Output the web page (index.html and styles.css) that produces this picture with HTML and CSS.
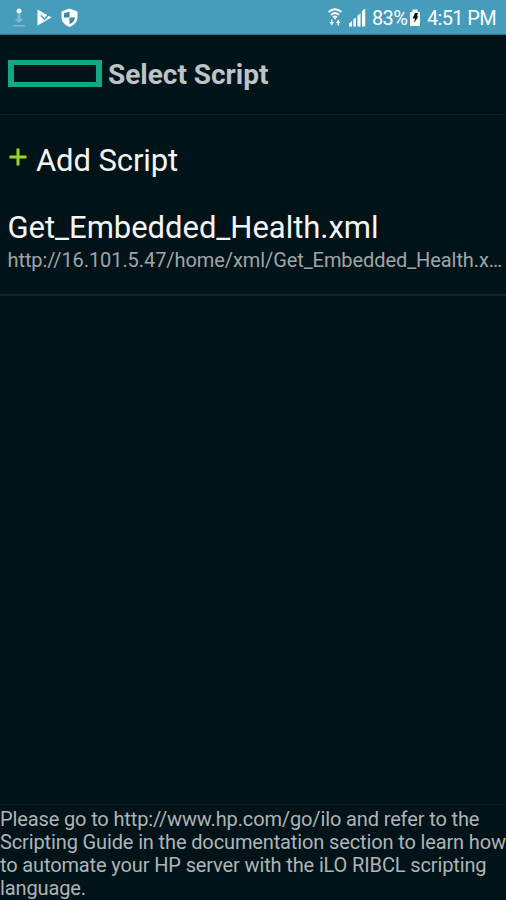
FILE: index.html
```html
<!DOCTYPE html>
<html lang="en">
<head>
<meta charset="utf-8">
<title>Select Script</title>
<link rel="stylesheet" href="styles.css">
</head>
<body>
<div class="screen">
  <div class="status">
    <svg class="status-left" width="90" height="34" viewBox="0 0 90 34">
      <g fill="#fff"><circle cx="19" cy="11" r="2.5"/><path opacity=".3" d="M17.500 14h3v5h3l-4.500 4-4.500-4h3zM13 25h12v1.500H13z"/>
      <path d="M37.500 9.500L51.500 17.500 37.500 25.500z"/>
      <path d="M69.500 8.500L77.500 11.500V17c0 4.500-3 8.200-8 10-5-1.800-8-5.500-8-10v-5.500z"/></g>
      <path d="M41 15.500l3.500 3.500 6.500-7" fill="none" stroke="#459cbb" stroke-width="1.600"/>
      <path fill="#348aa8" d="M69.500 11.500V17.500H64V13.500zM69.500 17.500H75c-.2 3-2.200 5.300-5.500 6.700z"/>
    </svg>
    <div class="status-right">
      <svg width="42" height="34" viewBox="0 0 42 34">
        <g fill="none" stroke="#fff" stroke-width="1.700"><path d="M1.500 12q6.500-5.500 13 0M4 14.800q4-3.600 8 0M6 17.300q2-1.800 4 0"/></g>
        <path fill="#fff" d="M6.500 17.500h3L8 20zM2.500 22h1.500v-2.500h1.500V22H7l-2.200 3.500zM9 23l2.200-3.500 2.200 3.500H12v2.500h-1.500V23z"/>
        <path fill="#fff" d="M22 23.500l3-2.500v5.500h-3zM26.300 19.500l2.700-2v9h-2.700zM30.500 15.500l3-2v13h-3zM35 11l3.200-2.500v18H35z"/>
      </svg>
      <span class="percent">83%</span>
      <svg class="battery" width="12" height="34" viewBox="0 0 12 34"><path fill="#fff" d="M3.500 9.500h5V12H11v14H1V12h2.500z"/><path fill="#111" d="M6 13h3l-1 3.500h1.500L5 23l1-4.500H3.500z"/></svg>
      <span class="time">4:51 PM</span>
    </div>
  </div>
  <header class="header"><span class="logo"></span><h1 class="title">Select Script</h1></header>
  <div class="add">
    <svg class="plus" width="18" height="18" viewBox="0 0 18 18"><path d="M9 .5v17M.5 9h17" stroke="#98d52b" stroke-width="3"/></svg>
    <span class="add-label">Add Script</span>
  </div>
  <div class="item">
    <div class="name">Get_Embedded_Health.xml</div>
    <div class="url">http://16.101.5.47/home/xml/Get_Embedded_Health.x…</div>
  </div>
  <footer class="help">Please go to http://www.hp.com/go/ilo and refer to the<br>Scripting Guide in the documentation section to learn how<br>to automate your HP server with the iLO RIBCL scripting<br>language.</footer>
</div>
</body>
</html>
```
FILE: styles.css
```css
* { box-sizing: border-box; }
body { margin: 0; background: #001319; font-family: Roboto, sans-serif; }
.screen { width: 506px; height: 900px; display: flex; flex-direction: column; overflow: hidden; white-space: nowrap; }
.status { height: 35px; background: #459cbb; border-bottom: 1px solid #2f7289; display: flex; justify-content: space-between; color: #fff; flex: none; }
.status-right { display: flex; width: 179px; font-size: 20px; line-height: 37px; letter-spacing: -0.65px; }
.status-right svg { flex: none; }
.percent { width: 37px; margin-left: 3px; }
.battery { margin: 0 6px 0 0; }
.header { height: 80px; flex: none; display: flex; align-items: center; padding: 0 8px 2px; border-bottom: 1px solid #0b2026; }
.logo { width: 94px; height: 27px; border: solid #14a784; border-width: 5px 6px; margin-right: 6px; }
.title { margin: 2px 0 0; color: #bdc3c7; font-size: 28px; line-height: 34px; font-weight: 700; letter-spacing: -0.02px; }
.add { height: 91px; flex: none; display: flex; align-items: center; padding-left: 9px; color: #f5f5f5; }
.plus { margin: -8px 9px 0 0; }
.add-label { font-size: 31px; letter-spacing: -0.1px; }
.item { height: 90px; flex: none; padding: 3px 0 0 7.5px; border-bottom: 2px solid #14262c; }
.name { color: #f5f5f5; font-size: 31px; line-height: 37px; letter-spacing: -0.03px; }
.url { color: #a0a5a7; font-size: 20px; line-height: 28px; letter-spacing: -0.08px; }
.help { margin-top: auto; height: 96px; padding-top: 3px; border-top: 1px solid #0b2026; color: #b0b4b5; font-size: 20px; line-height: 23px; letter-spacing: -0.13px; }
```
